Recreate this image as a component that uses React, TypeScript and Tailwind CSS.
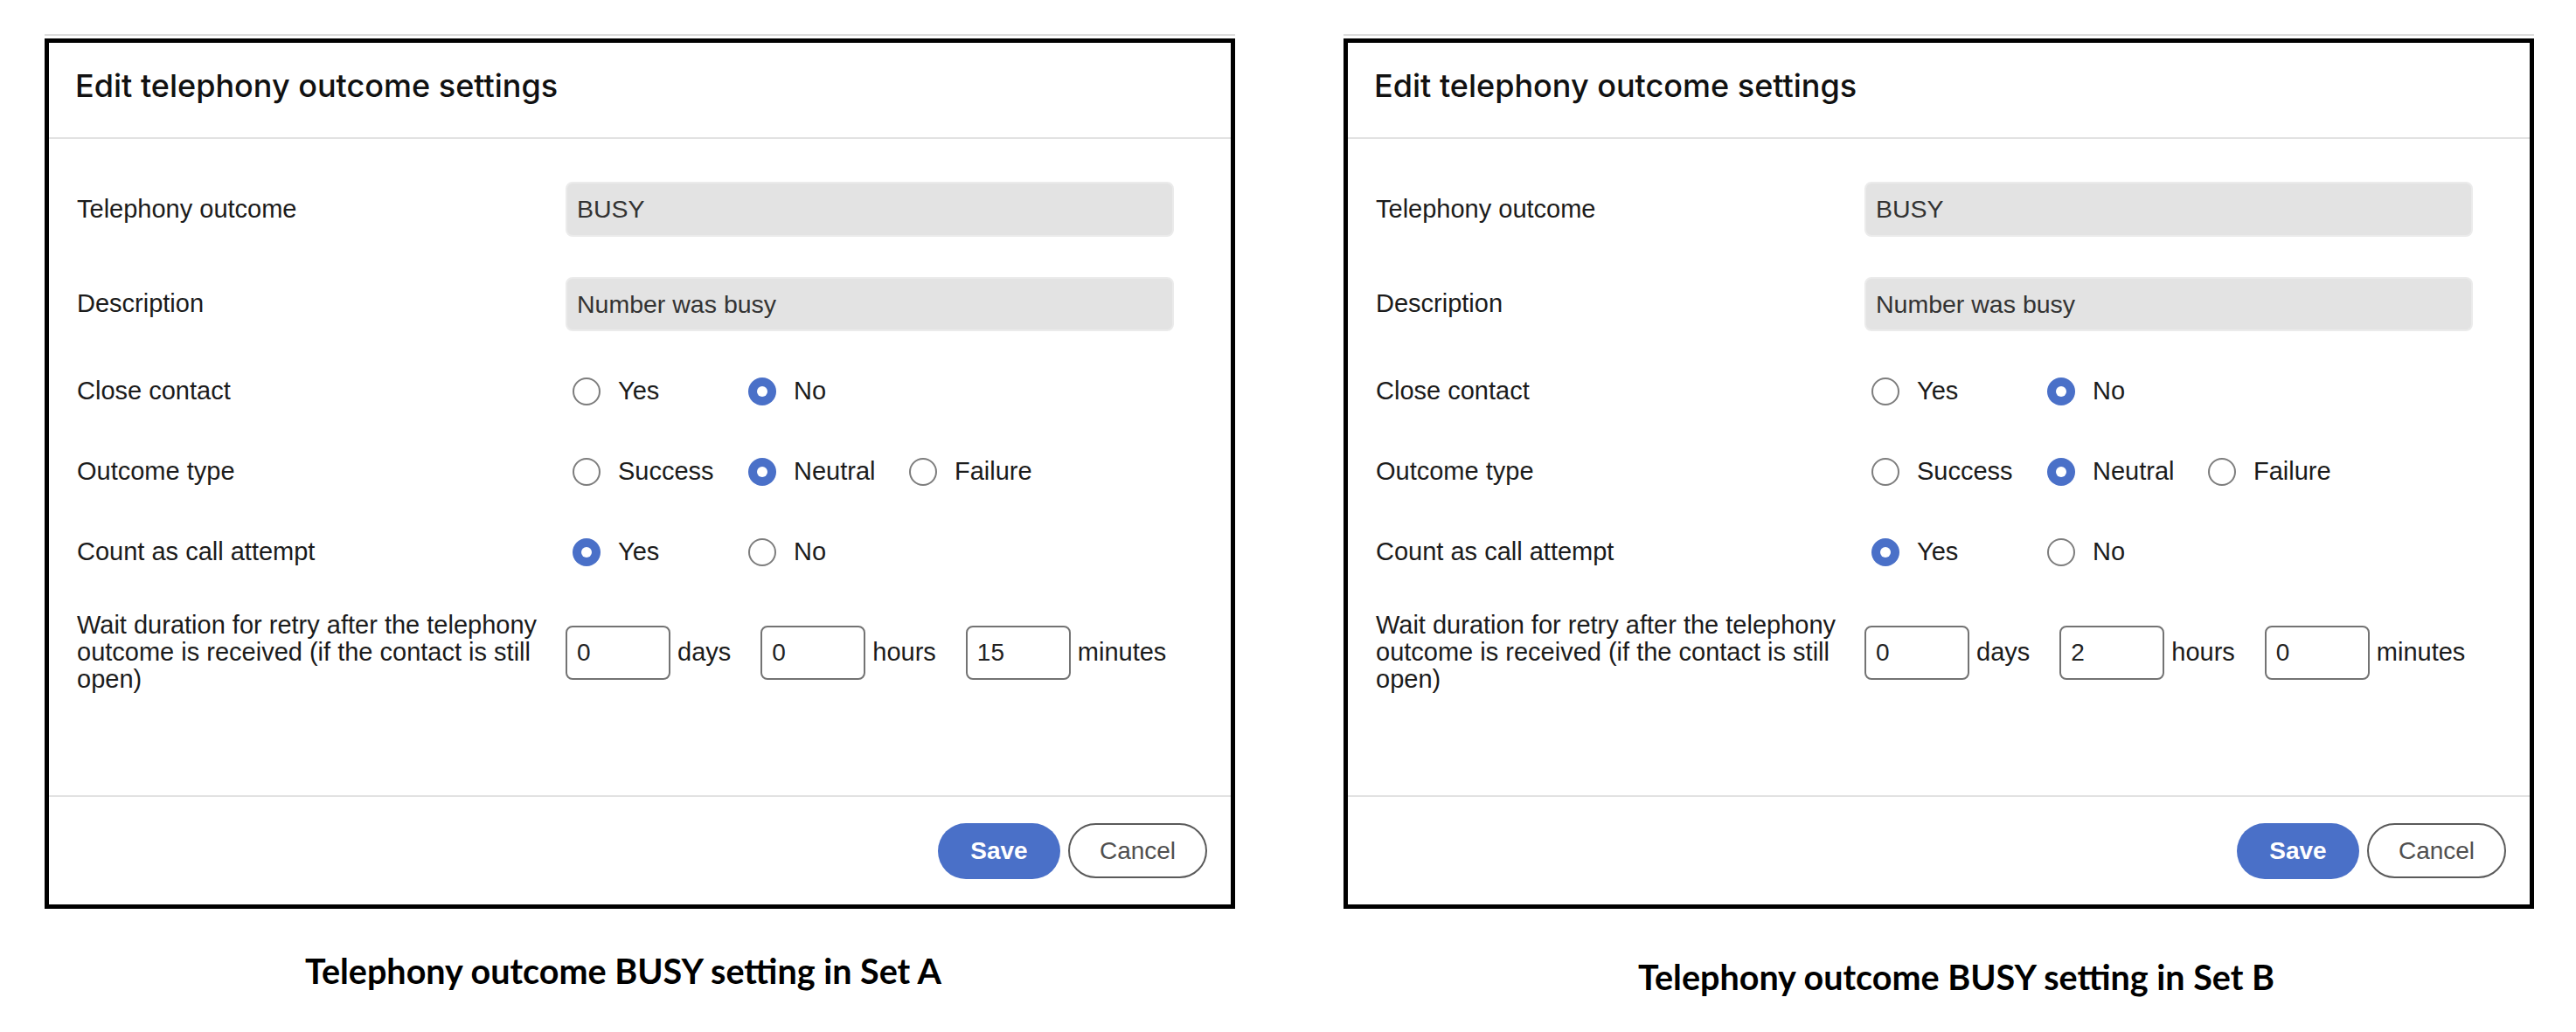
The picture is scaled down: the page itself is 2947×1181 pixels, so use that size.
import React from "react";

function Radio({ checked }: { checked: boolean }) {
  return checked ? (
    <span className="flex h-[32px] w-[32px] shrink-0 items-center justify-center rounded-full bg-[#4a70c8]">
      <span className="h-[12px] w-[12px] rounded-full bg-white" />
    </span>
  ) : (
    <span className="h-[32px] w-[32px] shrink-0 rounded-full border-2 border-[#7d7d7d] bg-white" />
  );
}

function Option({ label, checked, w }: { label: string; checked: boolean; w: string }) {
  return (
    <div className={"flex items-center gap-[20px] " + w}>
      <Radio checked={checked} />
      <span>{label}</span>
    </div>
  );
}

function Label({ children }: { children: React.ReactNode }) {
  return <div className="w-[559px] shrink-0">{children}</div>;
}

function NumBox({ value, unit }: { value: string; unit: string }) {
  return (
    <div className="flex items-center gap-[8px]">
      <div className="flex h-[62px] w-[120px] items-center rounded-[8px] border-2 border-[#737373] bg-white pl-[11px] text-[28px] text-[#222]">
        {value}
      </div>
      <span>{unit}</span>
    </div>
  );
}

function Panel({ days, hours, minutes }: { days: string; hours: string; minutes: string }) {
  return (
    <div className="flex w-[1362px] flex-col">
      <div className="h-[2px] bg-[#dcdcdc]" />
      <div className="mt-[3px] flex h-[996px] flex-col border-[5px] border-black bg-white">
        <div className="h-[110px] border-b-2 border-[#e2e2e2] pl-[30px] pt-[27px]">
          <h1 className="font-['Inter',sans-serif] text-[36px] font-medium leading-[44px] text-[#111]">
            Edit telephony outcome settings
          </h1>
        </div>
        <div className="flex flex-1 flex-col pl-[32px] pt-[49px] font-['Liberation_Sans',Arial,sans-serif] text-[29px] text-[#1b1b1b]">
          <div className="flex h-[63px] items-center">
            <Label>Telephony outcome</Label>
            <div className="flex h-[63px] w-[696px] items-center rounded-[8px] border-2 border-[#ebebeb] bg-[#e3e3e3] pl-[11px] text-[28.5px] text-[#333]">
              BUSY
            </div>
          </div>
          <div className="mt-[46px] flex h-[62px] items-center">
            <Label>Description</Label>
            <div className="flex h-[62px] w-[696px] items-center rounded-[8px] border-2 border-[#ebebeb] bg-[#e3e3e3] pl-[11px] text-[28.5px] text-[#333]">
              Number was busy
            </div>
          </div>
          <div className="mt-[49px] flex h-[40px] items-center">
            <Label>Close contact</Label>
            <div className="ml-[8px] flex items-center">
              <Option label="Yes" checked={false} w="w-[201px]" />
              <Option label="No" checked={true} w="w-[184px]" />
            </div>
          </div>
          <div className="mt-[52px] flex h-[40px] items-center">
            <Label>Outcome type</Label>
            <div className="ml-[8px] flex items-center">
              <Option label="Success" checked={false} w="w-[201px]" />
              <Option label="Neutral" checked={true} w="w-[184px]" />
              <Option label="Failure" checked={false} w="w-[184px]" />
            </div>
          </div>
          <div className="mt-[52px] flex h-[40px] items-center">
            <Label>Count as call attempt</Label>
            <div className="ml-[8px] flex items-center">
              <Option label="Yes" checked={true} w="w-[201px]" />
              <Option label="No" checked={false} w="w-[184px]" />
            </div>
          </div>
          <div className="mt-[48px] flex items-center">
            <div className="w-[559px] shrink-0 leading-[31px]">
              Wait duration for retry after the telephony outcome is received (if the contact is still open)
            </div>
            <div className="flex items-center gap-[34px]">
              <NumBox value={days} unit="days" />
              <NumBox value={hours} unit="hours" />
              <NumBox value={minutes} unit="minutes" />
            </div>
          </div>
        </div>
        <div className="flex h-[125px] items-center justify-end gap-[9px] border-t-2 border-[#e2e2e2] pr-[27px] font-['Liberation_Sans',Arial,sans-serif] text-[28px]">
          <button className="flex h-[64px] w-[140px] items-center justify-center rounded-full bg-[#4a70c8] font-bold text-white">
            Save
          </button>
          <button className="flex h-[63px] w-[159px] items-center justify-center rounded-full border-2 border-[#5a5a5a] bg-white text-[#4f4f4f]">
            Cancel
          </button>
        </div>
      </div>
    </div>
  );
}

export default function App() {
  return (
    <div className="flex h-[1181px] w-[2947px] gap-[124px] overflow-hidden bg-white pl-[51px] pt-[39px]">
      <div className="flex flex-col">
        <Panel days="0" hours="0" minutes="15" />
        <div className="mt-[47px] pr-[38px] text-center font-['Lato',sans-serif] text-[39.5px] font-bold leading-[48px] text-black">
          Telephony outcome BUSY setting in Set A
        </div>
      </div>
      <div className="flex flex-col">
        <Panel days="0" hours="2" minutes="0" />
        <div className="mt-[54px] pl-[40px] text-center font-['Lato',sans-serif] text-[39.5px] font-bold leading-[48px] text-black">
          Telephony outcome BUSY setting in Set B
        </div>
      </div>
    </div>
  );
}
